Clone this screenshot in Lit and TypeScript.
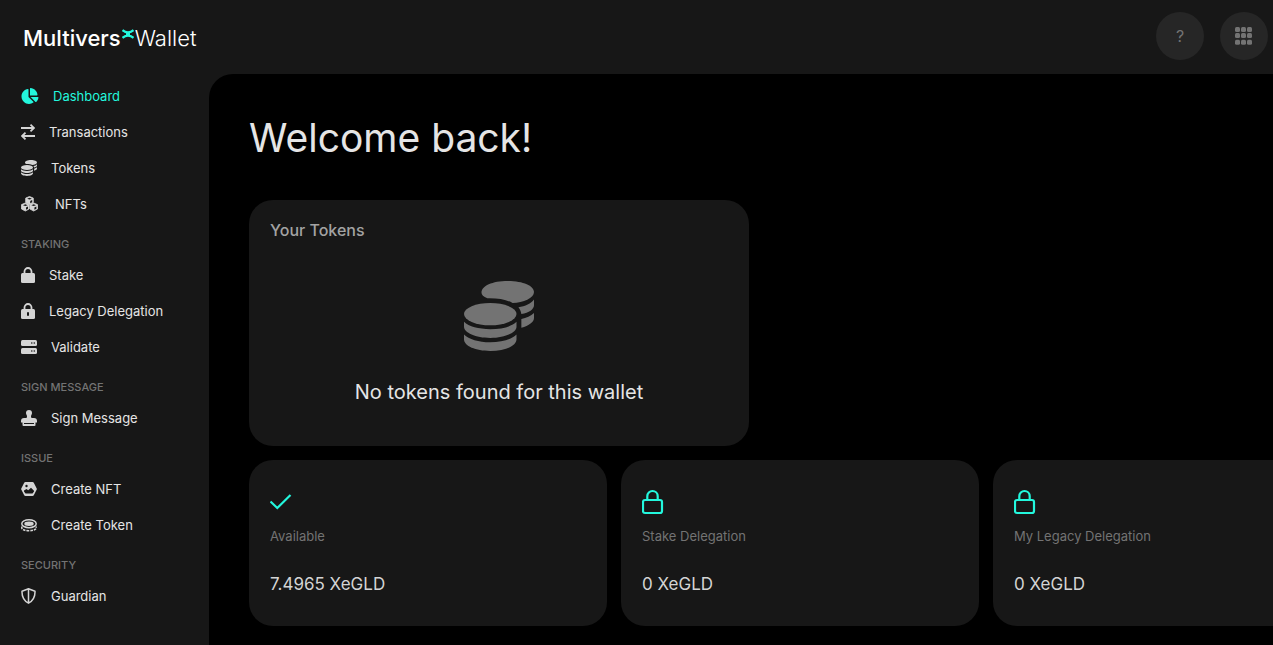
import { LitElement, html, svg, css } from "lit";
import type { SVGTemplateResult } from "lit";
import { customElement } from "lit/decorators.js";

interface Icon {
  width: number;
  height: number;
  viewBox: string;
  shape: SVGTemplateResult;
}

interface NavItem {
  label: string;
  icon: Icon;
  active?: boolean;
}

interface NavGroup {
  title?: string;
  items: NavItem[];
}

const coins = svg`
  <path d="M18 12C18 5 29 0 45 0s27 5 27 11.300-11 11-22 11.300C44 19 34 17.500 24 17.800 20 16 18 14 18 12z"/>
  <path d="M72 19v6c0 4-5 8-13 9-.500-3-1.500-5-3-7 7-1 13-4 16-8z"/>
  <path d="M72 33v5c0 4-5 8-13 10v-9c5-1 10-3 13-6z"/>
  <ellipse cx="27" cy="34" rx="27" ry="11.500"/>
  <path d="M0 42c5 5 15 7.500 27 7.500S49 47 54 42v5c0 6-12 11.500-27 11.500S0 53 0 47z"/>
  <path d="M0 55c5 5 15 8 27 8s22-3 27-8v5c0 7-12 12-27 12S0 67 0 60z"/>`;

const lockBody = svg`
  <path d="M3.500 7V4.500a3.500 3.500 0 0 1 7 0V7" fill="none" stroke="currentColor" stroke-width="1.800"/>`;

const cube = (x: number, y: number) => svg`
  <g transform="translate(${x} ${y})">
    <path d="M4 0 7.800 1.600V6L4 8 .200 6V1.600z" stroke="currentColor" stroke-width=".8" stroke-linejoin="round"/>
    <path d="M1.700 2.200 4 1.300l2.300.9L4 3.100z" fill="#171717"/>
    <path d="M4.700 4.500 6.700 3.500v2.200L4.700 6.800z" fill="#171717"/>
  </g>`;

const icons: Record<string, Icon> = {
  pie: {
    width: 18, height: 16, viewBox: "0 0 544 512",
    shape: svg`<path d="M527.790 288H290.500l158.030 158.030c6.040 6.040 15.980 6.530 22.190.680 38.700-36.460 65.320-85.610 73.130-140.860 1.340-9.460-6.510-17.850-16.060-17.850zm-15.830-64.800C503.720 103.740 408.260 8.280 288.800.040 279.680-.590 272 7.100 272 16.240V240h223.770c9.140 0 16.820-7.680 16.190-16.800zM224 288V50.710c0-9.550-8.390-17.400-17.840-16.060C86.990 51.490-4.100 155.600.140 280.370 4.500 408.510 114.830 513.590 243.030 511.980c50.400-.630 96.970-16.870 135.260-44.030 7.900-5.600 8.420-17.230 1.570-24.080L224 288z"/>`,
  },
  exchange: {
    width: 14, height: 16, viewBox: "0 0 14 16",
    shape: svg`<path d="M0 4h13M9.500.700 13 4 9.500 7.300M14 12H1M4.500 8.700 1 12l3.500 3.300" fill="none" stroke="currentColor" stroke-width="1.800"/>`,
  },
  coins: { width: 16, height: 16, viewBox: "0 0 72 72", shape: coins },
  cubes: {
    width: 20, height: 16, viewBox: "0 0 20 16",
    shape: svg`${cube(4.500, 0.500)}${cube(0.300, 7)}${cube(8.700, 7)}`,
  },
  lock: {
    width: 14, height: 16, viewBox: "0 0 14 16",
    shape: svg`${lockBody}<rect y="6" width="14" height="10" rx="1.500"/>`,
  },
  keyLock: {
    width: 14, height: 16, viewBox: "0 0 14 16",
    shape: svg`${lockBody}<rect y="6" width="14" height="10" rx="1.500"/><rect x="6" y="9" width="2" height="4" rx="1" fill="#171717"/>`,
  },
  server: {
    width: 16, height: 16, viewBox: "0 0 16 16",
    shape: svg`<rect y="1" width="16" height="6" rx="1.500"/><rect y="9" width="16" height="6" rx="1.500"/>
      <g fill="#171717"><circle cx="10.800" cy="4" r=".8"/><circle cx="13.300" cy="4" r=".8"/><circle cx="10.800" cy="12" r=".8"/><circle cx="13.300" cy="12" r=".8"/></g>`,
  },
  stamp: {
    width: 16, height: 16, viewBox: "0 0 16 16",
    shape: svg`<path d="M8 0a3 3 0 0 0-3 3c0 1.500 1 2 1 3.500C6 7.500 5.500 8 4.500 8H3a3 3 0 0 0-3 3v1.500h1.500V15a1 1 0 0 0 1 1h11a1 1 0 0 0 1-1v-2.500H16V11a3 3 0 0 0-3-3h-1.500C10.500 8 10 7.500 10 6.500 10 5 11 4.500 11 3a3 3 0 0 0-3-3z"/><path d="M3 13h10v1H3z" fill="#171717"/>`,
  },
  image: {
    width: 16, height: 16, viewBox: "0 0 16 16",
    shape: svg`<path d="M4.500 1h7a1.500 1.500 0 0 1 1.300.7l2.800 5.500a1.500 1.500 0 0 1 0 1.600l-2.800 5.500a1.500 1.500 0 0 1-1.300.7h-7a1.500 1.500 0 0 1-1.300-.7L.400 8.800a1.500 1.500 0 0 1 0-1.600l2.800-5.500A1.500 1.500 0 0 1 4.500 1z"/>
      <circle cx="5.500" cy="5" r="1.200" fill="#171717"/><path d="M3 10.500V9.500L5.500 8l1.700 1.300L10 6.800l3 2.900v.8l-1.500 2h-7z" fill="#171717"/>`,
  },
  coin: {
    width: 16, height: 16, viewBox: "0 0 16 16",
    shape: svg`<ellipse cx="8" cy="6.700" rx="7.200" ry="4" fill="none" stroke="currentColor" stroke-width="1.500"/><ellipse cx="8" cy="6.700" rx="4.700" ry="2.200"/>
      <path d="M.800 9.500v1.200c0 2 3.200 3 7.200 3s7.200-1 7.200-3V9.500" fill="none" stroke="currentColor" stroke-width="1.600" stroke-dasharray="2.600 1"/>`,
  },
  shield: {
    width: 16, height: 16, viewBox: "0 0 16 16",
    shape: svg`<path d="M7.500.800 14 3.200c.2 5-1.800 9.500-6.500 12C2.800 12.700.800 8.200 1 3.200zM7.500 1v14" fill="none" stroke="currentColor" stroke-width="1.500" stroke-linejoin="round"/>`,
  },
  check: {
    width: 22, height: 28, viewBox: "0 0 22 28",
    shape: svg`<path d="M.500 13.500 7.300 20 20.500 7" fill="none" stroke="currentColor" stroke-width="2.200"/>`,
  },
  openLock: {
    width: 22, height: 28, viewBox: "0 0 22 28",
    shape: svg`<rect x="1" y="12" width="19" height="13" rx="2" fill="none" stroke="currentColor" stroke-width="2.200"/><path d="M5.300 12V8.200a5.200 5.200 0 0 1 10.400 0V12" fill="none" stroke="currentColor" stroke-width="2.200"/>`,
  },
  bigCoins: { width: 70, height: 70, viewBox: "0 0 72 72", shape: coins },
  apps: {
    width: 18, height: 18, viewBox: "0 0 18 18",
    shape: svg`${[0, 6, 12].map((y) => [0, 6, 12].map((x) => svg`<rect x=${x} y=${y + (y === 12 ? 0.800 : 0)} width="5" height="5" rx="1.500"/>`))}`,
  },
};

const groups: NavGroup[] = [
  {
    items: [
      { label: "Dashboard", icon: icons.pie, active: true },
      { label: "Transactions", icon: icons.exchange },
      { label: "Tokens", icon: icons.coins },
      { label: "NFTs", icon: icons.cubes },
    ],
  },
  {
    title: "STAKING",
    items: [
      { label: "Stake", icon: icons.lock },
      { label: "Legacy Delegation", icon: icons.keyLock },
      { label: "Validate", icon: icons.server },
    ],
  },
  { title: "SIGN MESSAGE", items: [{ label: "Sign Message", icon: icons.stamp }] },
  {
    title: "ISSUE",
    items: [
      { label: "Create NFT", icon: icons.image },
      { label: "Create Token", icon: icons.coin },
    ],
  },
  { title: "SECURITY", items: [{ label: "Guardian", icon: icons.shield }] },
];

const balances = [
  { label: "Available", value: "7.4965 XeGLD", icon: icons.check },
  { label: "Stake Delegation", value: "0 XeGLD", icon: icons.openLock },
  { label: "My Legacy Delegation", value: "0 XeGLD", icon: icons.openLock },
];

const draw = (icon: Icon) => html`<svg
  width=${icon.width}
  height=${icon.height}
  viewBox=${icon.viewBox}
  fill="currentColor"
  aria-hidden="true"
>${icon.shape}</svg>`;

@customElement("app-root")
export class AppRoot extends LitElement {
  static styles = css`
    :host {
      display: flex;
      flex-direction: column;
      height: 100vh;
      overflow: hidden;
      background: #171717;
      color: #e5e5e5;
      font-family: Inter, "Liberation Sans", sans-serif;
      font-size: 13px;
      line-height: 20px;
    }
    svg {
      display: block;
      flex: none;
    }
    .header {
      display: flex;
      align-items: center;
      justify-content: space-between;
      flex: none;
      padding: 12px 5px 14px 23px;
    }
    .logo {
      display: flex;
      align-items: center;
      padding-top: 4px;
      color: #fff;
      font-size: 22px;
      line-height: 28px;
      text-decoration: none;
    }
    .logo-name {
      font-weight: 500;
    }
    .logo-mark {
      margin: 0 1px 8px;
      color: #23f7dd;
    }
    .logo-product {
      font-weight: 300;
    }
    .actions {
      display: flex;
      gap: 16px;
    }
    .round {
      display: flex;
      align-items: center;
      justify-content: center;
      width: 48px;
      height: 48px;
      padding: 0;
      border: 0;
      border-radius: 50%;
      background: #262626;
      color: #737373;
      font: inherit;
      font-size: 16px;
    }
    .body {
      display: flex;
      flex: 1;
      min-height: 0;
    }
    .sidebar {
      flex: none;
      width: 188px;
      padding: 4px 0 0 21px;
    }
    .group-title {
      margin: 0;
      padding: 14px 0 5px;
      color: #737373;
      font-size: 11px;
      font-weight: 500;
      line-height: 16px;
    }
    .list {
      margin: 0;
      padding: 0;
      list-style: none;
    }
    .link {
      display: flex;
      align-items: center;
      gap: 14px;
      height: 36px;
      color: #e5e5e5;
      text-decoration: none;
    }
    .link svg {
      color: #d4d4d4;
    }
    .link.active,
    .link.active svg {
      color: #23f7dd;
    }
    .main {
      flex: 1;
      min-width: 0;
      overflow: hidden;
      padding: 40px 0 0 40px;
      border-top-left-radius: 24px;
      background: #000;
    }
    .title {
      margin: 0 0 38px;
      font-size: 39px;
      font-weight: 400;
      line-height: 48px;
    }
    .card {
      box-sizing: border-box;
      border-radius: 24px;
      background: #171717;
    }
    .tokens {
      width: 500px;
      max-width: 100%;
      padding: 20px 21px 40px;
    }
    .card-title {
      margin: 0;
      color: #a3a3a3;
      font-size: 16px;
      font-weight: 500;
      line-height: 20px;
    }
    .empty {
      display: flex;
      flex-direction: column;
      align-items: center;
      gap: 27px;
      padding-top: 41px;
      color: #737373;
    }
    .empty-text {
      margin: 0;
      color: #e5e5e5;
      font-size: 20px;
      line-height: 28px;
    }
    .balances {
      display: flex;
      gap: 14px;
      margin-top: 14px;
    }
    .balance {
      flex: none;
      width: 358px;
      padding: 28px 21px 30px;
    }
    .balance svg {
      color: #23f7dd;
    }
    .balance-label {
      margin: 10px 0 0;
      color: #737373;
    }
    .balance-value {
      margin: 26px 0 0;
      color: #d4d4d4;
      font-size: 17px;
      line-height: 24px;
    }
  `;

  render() {
    return html`
      <header class="header">
        <a class="logo" href="#" aria-label="MultiversX Wallet">
          <span class="logo-name">Multivers</span>
          <svg class="logo-mark" width="12" height="10" viewBox="0 0 12 10" fill="none" stroke="currentColor" stroke-width="2.200">
            <path d="M.500 1.200Q6 5.500 11.500 1.200M.500 8.800Q6 4.500 11.500 8.800M4 5h4" />
          </svg>
          <span class="logo-product">Wallet</span>
        </a>
        <div class="actions">
          <button class="round" type="button" aria-label="Help">?</button>
          <button class="round" type="button" aria-label="Apps">${draw(icons.apps)}</button>
        </div>
      </header>
      <div class="body">
        <nav class="sidebar">
          ${groups.map(
            (group) => html`
              ${group.title ? html`<h2 class="group-title">${group.title}</h2>` : ""}
              <ul class="list">
                ${group.items.map(
                  (item) => html`<li>
                    <a class="link ${item.active ? "active" : ""}" href="#">${draw(item.icon)}<span>${item.label}</span></a>
                  </li>`
                )}
              </ul>
            `
          )}
        </nav>
        <main class="main">
          <h1 class="title">Welcome back!</h1>
          <section class="card tokens">
            <h2 class="card-title">Your Tokens</h2>
            <div class="empty">
              ${draw(icons.bigCoins)}
              <p class="empty-text">No tokens found for this wallet</p>
            </div>
          </section>
          <div class="balances">
            ${balances.map(
              (balance) => html`<section class="card balance">
                ${draw(balance.icon)}
                <p class="balance-label">${balance.label}</p>
                <p class="balance-value">${balance.value}</p>
              </section>`
            )}
          </div>
        </main>
      </div>
    `;
  }
}
